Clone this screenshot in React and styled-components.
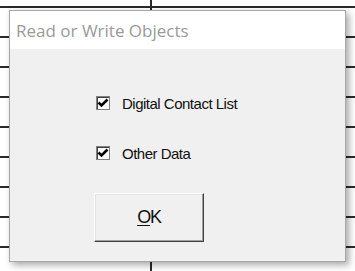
import React, { useState } from 'react';
import styled, { createGlobalStyle } from 'styled-components';

const GlobalStyle = createGlobalStyle`
  html, body {
    margin: 0;
    padding: 0;
    background: #ffffff;
  }
  #root {
    width: 355px;
    height: 271px;
    overflow: hidden;
  }
`;

// spreadsheet-like grid behind the dialog
const Sheet = styled.div`
  width: 355px;
  height: 271px;
  box-sizing: border-box;
  padding: 10px 0 0 9px;
  background-color: #ffffff;
  background-image:
    linear-gradient(90deg, transparent 150px, #2a2a2a 150px, #2a2a2a 152px, transparent 152px),
    repeating-linear-gradient(180deg, transparent 0, transparent 6px, #2a2a2a 6px, #2a2a2a 8px, transparent 8px, transparent 30px);
`;

const Dialog = styled.div`
  width: 337px;
  height: 252px;
  box-sizing: border-box;
  border: 1px solid #a8a8a8;
  background: #f0f0f0;
  box-shadow: 3px 3px 7px rgba(0, 0, 0, 0.35);
  display: flex;
  flex-direction: column;
`;

const TitleBar = styled.div`
  height: 38px;
  background: #ffffff;
  display: flex;
  align-items: center;
  padding-left: 6px;
  font-family: "Open Sans", "Noto Sans", sans-serif;
  font-size: 17px;
  color: #9a9a9a;
`;

const Body = styled.div`
  flex: 1;
  display: flex;
  flex-direction: column;
  padding: 47px 0 0 86px;
`;

const CheckRow = styled.label`
  display: flex;
  align-items: center;
  gap: 12px;
  height: 14px;
  margin-bottom: ${p => p.last ? '33px' : '36px'};
  font-family: "Liberation Sans", Arial, sans-serif;
  font-size: 15px;
  letter-spacing: -0.5px;
  color: #111;
  cursor: default;
`;

const Box = styled.span`
  width: 14px;
  height: 14px;
  box-sizing: border-box;
  background: #ffffff;
  border: 1px solid #808080;
  box-shadow: inset 1px 1px 0 #404040;
  display: flex;
  align-items: center;
  justify-content: center;
`;

const OkButton = styled.button`
  margin-left: -2px;
  width: 110px;
  height: 49px;
  background: #f0f0f0;
  border: 1px solid;
  border-color: #ffffff #404040 #404040 #ffffff;
  box-shadow: inset -1px -1px 0 #a0a0a0, inset 1px 1px 0 #e3e3e3;
  font-family: "Liberation Sans", Arial, sans-serif;
  font-size: 18px;
  letter-spacing: -1.2px;
  color: #111;
  padding: 0;
`;

const Mnemonic = styled.span`
  text-decoration: underline;
  text-underline-offset: 2px;
`;

const Check = () => (
  <svg width="12" height="12" viewBox="0 0 12 12">
    <path d="M1.5 5.5 L4.5 8.5 L10.5 2.5" fill="none" stroke="#000" strokeWidth="2.6" />
  </svg>
);

const Checkbox = ({ label, checked, onToggle, last }) => (
  <CheckRow last={last} onClick={onToggle}>
    <Box>{checked && <Check />}</Box>
    <span>{label}</span>
  </CheckRow>
);

export default function App() {
  const [contacts, setContacts] = useState(true);
  const [other, setOther] = useState(true);

  return (
    <>
      <GlobalStyle />
      <Sheet>
        <Dialog>
          <TitleBar>Read or Write Objects</TitleBar>
          <Body>
            <Checkbox label="Digital Contact List" checked={contacts} onToggle={() => setContacts(!contacts)} />
            <Checkbox label="Other Data" checked={other} onToggle={() => setOther(!other)} last />
            <OkButton><Mnemonic>O</Mnemonic>K</OkButton>
          </Body>
        </Dialog>
      </Sheet>
    </>
  );
}
